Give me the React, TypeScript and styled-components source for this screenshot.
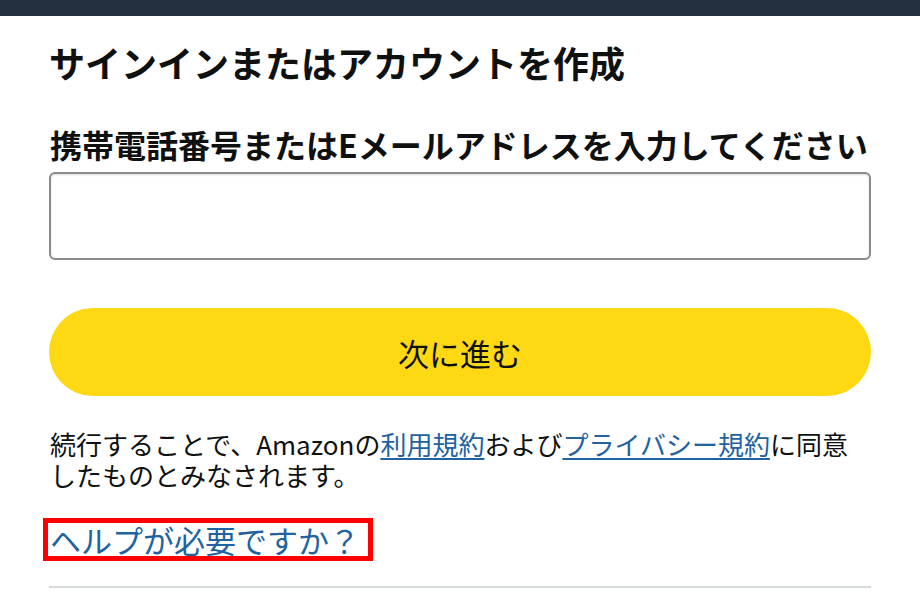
import styled, {createGlobalStyle} from "styled-components";
import React, {useState} from "react";

const GlobalStyle = createGlobalStyle`
    html, body {
        margin: 0;
        padding: 0;
        background: #ffffff;
        font-family: "Noto Sans CJK JP", "Noto Sans", "Liberation Sans", sans-serif;
        color: #0f1111;
    }
`;

const TopBar = styled.div`
    height: 16px;
    background: #232f3e;
`;

const Main = styled.main`
    display: flex;
    flex-direction: column;
    align-items: stretch;
    padding: 0 49px;
`;

const Heading = styled.h1`
    margin: 24px 0 0 0;
    font-size: 36px;
    line-height: 44px;
    font-weight: 700;
    letter-spacing: 0;
`;

const FieldLabel = styled.label`
    margin-top: 40px;
    font-size: 32px;
    line-height: 40px;
    font-weight: 700;
    padding-left: 1px;
`;

const TextInput = styled.input`
    margin-top: 8px;
    height: 88px;
    box-sizing: border-box;
    border: 2px solid #888c8c;
    border-radius: 6px;
    box-shadow: inset 0 1px 2px rgba(15, 17, 17, 0.15);
    padding: 0 14px;
    font-size: 30px;
    font-family: inherit;
    outline: none;
`;

const PrimaryButton = styled.button`
    margin-top: 48px;
    height: 88px;
    border: none;
    border-radius: 44px;
    background: #ffd814;
    color: #0f1111;
    font-family: inherit;
    font-size: 31px;
    cursor: pointer;
`;

const Legal = styled.p`
    margin: 32px 0 0 0;
    padding-left: 1px;
    font-size: 26px;
    line-height: 31px;
`;

const InlineLink = styled.a`
    color: #2162a1;
    text-decoration: underline;
    text-decoration-thickness: 2px;
    text-underline-offset: 3px;
`;

const HelpRow = styled.div`
    margin-top: 28px;
    display: flex;
`;

const HelpLink = styled.a<{ $highlight: boolean }>`
    margin-left: -6px;
    padding: 0 8px 0 2px;
    border: 5px solid ${({ $highlight }) => ($highlight ? "#ff0000" : "transparent")};
    color: #2162a1;
    text-decoration: none;
    font-size: 31px;
    line-height: 33px;
    cursor: pointer;
`;

const Divider = styled.hr`
    margin: 25px 0 0 0;
    border: none;
    height: 2px;
    background: #d5dbdb;
`;

function App() {
    const [value, setValue] = useState<string>("");

    return (
        <>
            <GlobalStyle/>
            <TopBar/>
            <Main>
                <Heading>サインインまたはアカウントを作成</Heading>
                <FieldLabel htmlFor="ap_email">携帯電話番号またはEメールアドレスを入力してください</FieldLabel>
                <TextInput id="ap_email" type="text" value={value} onChange={(e) => setValue(e.target.value)}/>
                <PrimaryButton type="button">次に進む</PrimaryButton>
                <Legal>
                    続行することで、Amazonの<InlineLink href="#">利用規約</InlineLink>および<InlineLink href="#">プライバシー規約</InlineLink>に同意したものとみなされます。
                </Legal>
                <HelpRow>
                    <HelpLink href="#" $highlight={true}>ヘルプが必要ですか？</HelpLink>
                </HelpRow>
                <Divider/>
            </Main>
        </>
    );
}

export default App;
